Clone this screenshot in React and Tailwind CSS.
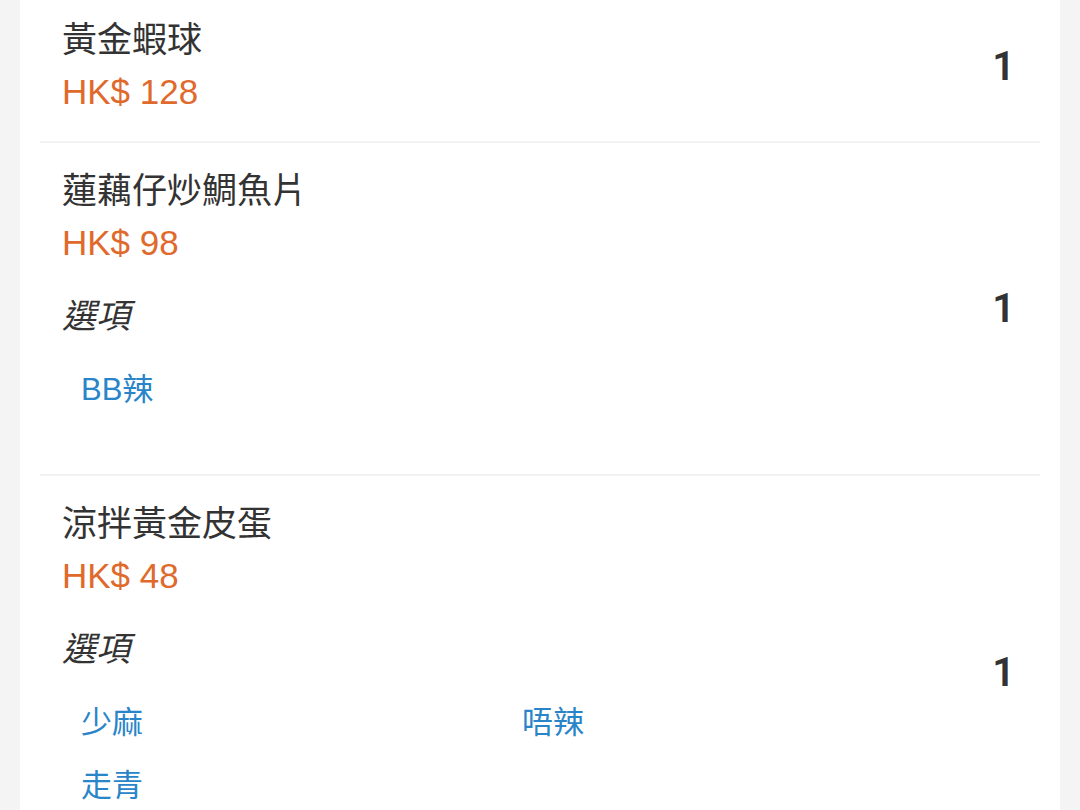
import React from 'react';

const items = [
  { name: '黃金蝦球', price: 128, qty: 1 },
  { name: '蓮藕仔炒鯛魚片', price: 98, qty: 1, options: ['BB辣'] },
  { name: '涼拌黃金皮蛋', price: 48, qty: 1, options: ['少麻', '唔辣', '走青'] },
];

const font = { fontFamily: '"Liberation Sans", "Noto Sans CJK TC", sans-serif' };
const qtyFont = { fontFamily: 'Roboto, "Liberation Sans", sans-serif' };

const OrderItem = ({ item }) => (
  <div className="flex items-center border-b-2 border-[#f2f2f2] px-[22px]">
    <div className="flex-1 pt-[26px] pb-[27px]">
      <div className="text-[35px] leading-[44px] text-[#333333]">{item.name}</div>
      <div className="mt-[8px] text-[35px] leading-[44px] text-[#e0692c]">HK$ {item.price}</div>
      {item.options && (
        <div>
          <div className="mt-[29px] text-[34px] leading-[44px] italic text-[#333333]">選項</div>
          <div className="mt-[30px] grid w-[901px] grid-cols-2 gap-y-[19px] pl-[19px] pb-[35px]">
            {item.options.map((opt) => (
              <div key={opt} className="text-[31px] leading-[44px] text-[#2a85c8]">
                {opt}
              </div>
            ))}
          </div>
        </div>
      )}
    </div>
    <div className="pr-[3px] text-[40px] font-semibold leading-[44px] text-[#333333]" style={qtyFont}>
      {item.qty}
    </div>
  </div>
);

const App = () => {
  return (
    <div className="h-[810px] overflow-hidden bg-[#f4f4f4] px-[20px]" style={font}>
      <div className="-mt-[8px] h-[900px] bg-white px-[20px]">
        {items.map((item) => (
          <OrderItem key={item.name} item={item} />
        ))}
      </div>
    </div>
  );
};

export default App;
